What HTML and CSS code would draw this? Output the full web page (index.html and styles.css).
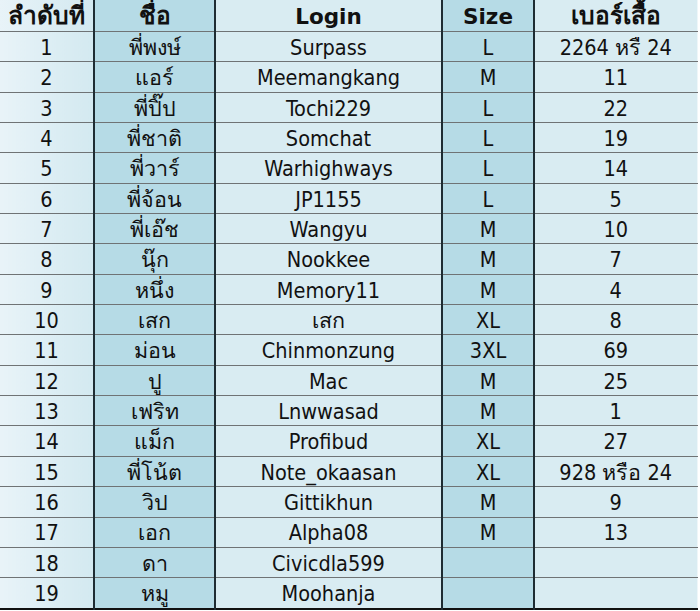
FILE: index.html
```html
<!DOCTYPE html>
<html>
<head>
<meta charset="utf-8">
<link rel="stylesheet" href="styles.css">
</head>
<body>
<table class="roster">
  <colgroup>
    <col class="c1"><col class="c2"><col class="c3"><col class="c4"><col class="c5">
  </colgroup>
  <thead>
    <tr><th class="thai">ลำดับที่</th><th class="thai">ชื่อ</th><th>Login</th><th>Size</th><th class="thai">เบอร์เสื้อ</th></tr>
  </thead>
  <tbody>
    <tr><td>1</td><td>พี่พงษ์</td><td>Surpass</td><td>L</td><td>2264 หรื 24</td></tr>
    <tr><td>2</td><td>แอร์</td><td>Meemangkang</td><td>M</td><td>11</td></tr>
    <tr><td>3</td><td>พี่ปิ๊ป</td><td>Tochi229</td><td>L</td><td>22</td></tr>
    <tr><td>4</td><td>พี่ชาติ</td><td>Somchat</td><td>L</td><td>19</td></tr>
    <tr><td>5</td><td>พี่วาร์</td><td>Warhighways</td><td>L</td><td>14</td></tr>
    <tr><td>6</td><td>พี่จ้อน</td><td>JP1155</td><td>L</td><td>5</td></tr>
    <tr><td>7</td><td>พี่เอ๊ช</td><td>Wangyu</td><td>M</td><td>10</td></tr>
    <tr><td>8</td><td>นุ๊ก</td><td>Nookkee</td><td>M</td><td>7</td></tr>
    <tr><td>9</td><td>หนึ่ง</td><td>Memory11</td><td>M</td><td>4</td></tr>
    <tr><td>10</td><td>เสก</td><td>เสก</td><td>XL</td><td>8</td></tr>
    <tr><td>11</td><td>ม่อน</td><td>Chinmonzung</td><td>3XL</td><td>69</td></tr>
    <tr><td>12</td><td>ปู</td><td>Mac</td><td>M</td><td>25</td></tr>
    <tr><td>13</td><td>เฟริท</td><td>Lnwwasad</td><td>M</td><td>1</td></tr>
    <tr><td>14</td><td>แม็ก</td><td>Profibud</td><td>XL</td><td>27</td></tr>
    <tr><td>15</td><td>พี่โน้ต</td><td>Note_okaasan</td><td>XL</td><td>928 หรือ 24</td></tr>
    <tr><td>16</td><td>วิป</td><td>Gittikhun</td><td>M</td><td>9</td></tr>
    <tr><td>17</td><td>เอก</td><td>Alpha08</td><td>M</td><td>13</td></tr>
    <tr><td>18</td><td>ดา</td><td>Civicdla599</td><td></td><td></td></tr>
    <tr><td>19</td><td>หมู</td><td>Moohanja</td><td></td><td></td></tr>
  </tbody>
</table>
</body>
</html>
```

FILE: styles.css
```css
html, body {
  margin: 0;
  padding: 0;
  background: #ffffff;
}
.roster {
  border-collapse: collapse;
  table-layout: fixed;
  width: 697px;
  font-family: "DejaVu Sans Condensed", "DejaVu Sans", "Noto Sans", sans-serif;
  font-size: 21.5px;
  color: #111111;
  border-bottom: 2px solid #111111;
  border-right: 1px solid #eef6f9;
}
.c1 { width: 94px; }
.c2 { width: 121px; }
.c3 { width: 227px; }
.c4 { width: 92px; }
.c5 { width: 163px; }
.roster th, .roster td {
  height: 27.35px;
  padding: 2px 0 0 0;
  text-align: center;
  vertical-align: middle;
  border-right: 2px solid #1e2c33;
  border-top: 1px solid #6f7375;
  line-height: 1;
  white-space: nowrap;
  overflow: hidden;
  background: #d9ecf2;
}
.roster th {
  border-top: none;
  font-family: "DejaVu Sans", "Noto Sans", sans-serif;
  font-weight: bold;
  font-size: 21.5px;
  height: 29px;
}
.roster th.thai {
  font-size: 24.5px;
}
.roster th:last-child, .roster td:last-child {
  border-right: none;
}
.roster th:first-child, .roster td:first-child {
  background: linear-gradient(to right, #e8f3f8, #d3e9f0);
}
.roster th:nth-child(2), .roster td:nth-child(2),
.roster th:nth-child(4), .roster td:nth-child(4) {
  background: #b6dbe6;
}
```
